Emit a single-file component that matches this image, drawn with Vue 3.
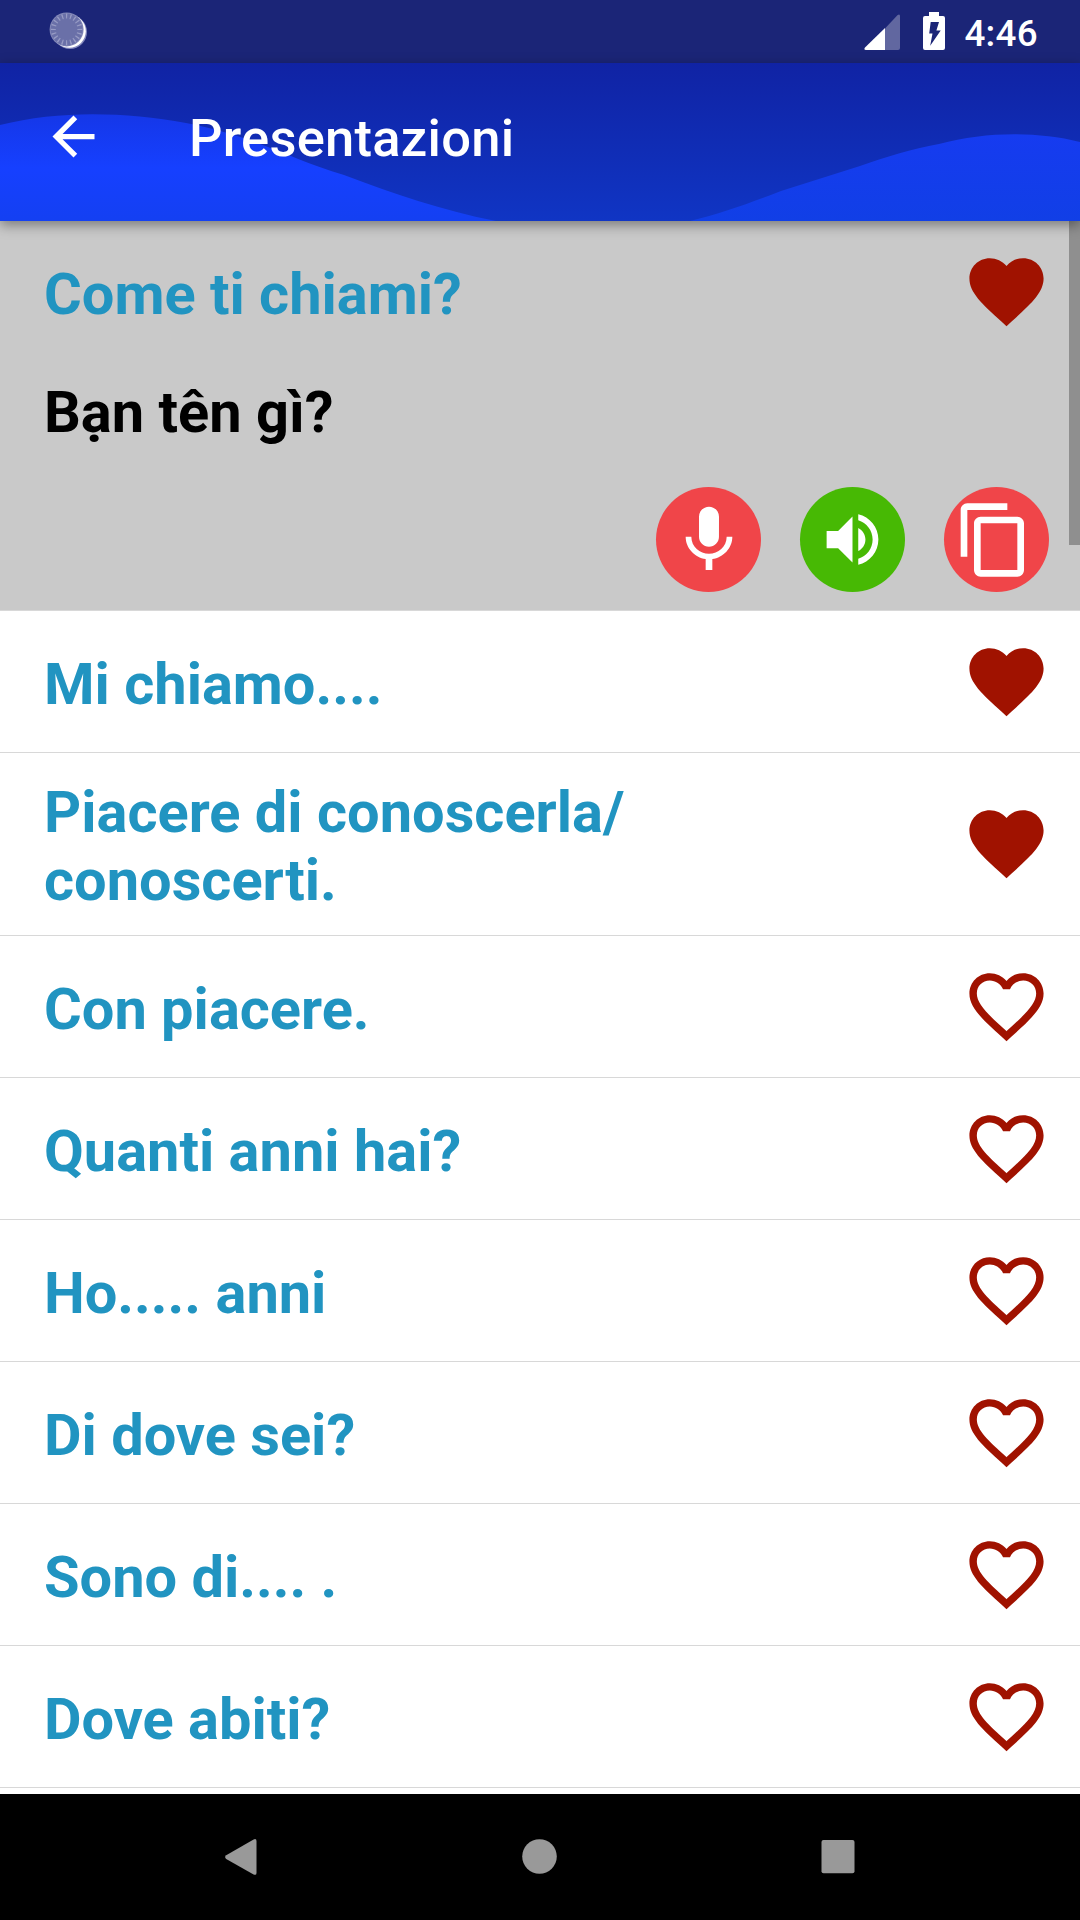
<template>
  <div class="screen">
    <!-- Barra di stato -->
    <div class="status-bar">
      <svg class="sync-icon" width="40" height="40" viewBox="0 0 40 40">
        <circle cx="22" cy="22" r="17" fill="#8388bd" />
        <circle cx="21.2" cy="21.2" r="16.6" fill="#ffffff" />
        <circle cx="18.6" cy="19.4" r="17" fill="#8388b8" />
        <circle cx="18.6" cy="19.4" r="16" fill="#6a70a8" />
        <circle class="ticks" cx="18.6" cy="19.4" r="13.3" pathLength="200" />
      </svg>
      <div class="status-right">
        <svg class="signal-icon" width="36" height="36" viewBox="0 0 36 36">
          <path d="M21 14.4L33.4 1.2Q36 -.6 36 2V34q0 2-2 2H21z" fill="#6167a0" />
          <path d="M21 14V36H2Q-.6 36 1 33.6z" fill="#ffffff" />
        </svg>
        <svg class="battery-icon" width="22" height="38" viewBox="0 0 22 38">
          <path
            fill="#ffffff"
            fill-rule="evenodd"
            d="M6 0h10v4h4q2 0 2 2v30q0 2-2 2H2q-2 0-2-2V6q0-2 2-2h4zM7.700 10L6.200 21.500H9.500L7.200 33.700L17.700 18.600H13.400L16 10z"
          />
        </svg>
        <span class="clock">4:46</span>
      </div>
    </div>

    <!-- Toolbar con onda -->
    <div class="toolbar">
      <svg class="wave" width="1080" height="158" viewBox="0 0 1080 158">
        <defs>
          <linearGradient id="waveLeft" x1="0" y1="0" x2="0" y2="1">
            <stop offset="0" stop-color="#1537e8" />
            <stop offset="0.5" stop-color="#1640ff" />
            <stop offset="1" stop-color="#1440f2" />
          </linearGradient>
          <linearGradient id="waveRight" x1="0" y1="0" x2="0" y2="1">
            <stop offset="0" stop-color="#163bf0" />
            <stop offset="1" stop-color="#113fe6" />
          </linearGradient>
        </defs>
        <path fill="url(#waveLeft)" d="M0 62C60 47 125 49 186 60C255 73 290 96 344 112C395 131 440 147 496 158H0z" />
        <path fill="url(#waveRight)" d="M690 158C722 150 750 140 781 128L860 103C885 94 912 86 939 81C985 69 1035 68 1080 79V158z" />
      </svg>
      <div class="toolbar-content">
        <svg class="back-icon" width="63" height="63" viewBox="0 0 24 24" fill="#ffffff">
          <path d="M20 11H7.83l5.59-5.59L12 4l-8 8 8 8 1.41-1.41L7.83 13H20v-2z" />
        </svg>
        <h1 class="title">Presentazioni</h1>
      </div>
    </div>

    <!-- Lista frasi -->
    <div class="phrase-list">
      <div v-for="phrase in phrases" :key="phrase.id" class="phrase" :class="{ open: phrase.id === openId }">
        <div class="phrase-row" @click="toggle(phrase)">
          <span class="phrase-text">{{ phrase.text }}</span>
          <svg class="heart" width="89" height="89" viewBox="0 0 24 24" @click.stop="phrase.favorite = !phrase.favorite">
            <path :d="phrase.favorite ? heartFull : heartBorder" />
          </svg>
        </div>
        <div v-if="phrase.id === openId" class="phrase-detail">
          <div class="translation">{{ phrase.translation }}</div>
          <div class="actions">
            <button v-for="action in actions" :key="action.name" class="action" :class="action.name">
              <svg viewBox="0 0 24 24" fill="#ffffff"><path :d="action.icon" /></svg>
            </button>
          </div>
        </div>
      </div>
      <div class="scrollbar"></div>
    </div>

    <!-- Barra di navigazione -->
    <div class="nav-bar">
      <svg width="36" height="40" viewBox="0 0 36 40" fill="#999999">
        <path d="M3.2 18.2L30.6 2.4Q33.5 1.3 33.5 4V36Q33.5 38.7 30.6 37.5L3.2 22Q1 20 3.2 18.2z" />
      </svg>
      <svg width="36" height="40" viewBox="0 0 36 40" fill="#999999">
        <circle cx="17.5" cy="19.5" r="17.3" />
      </svg>
      <svg width="36" height="40" viewBox="0 0 36 40" fill="#999999">
        <rect x="1.5" y="3" width="33" height="33.3" rx="2" />
      </svg>
    </div>
  </div>
</template>

<script setup>
import { ref } from "vue";

const heartFull =
  "M12 21.35l-1.45-1.32C5.4 15.36 2 12.28 2 8.5 2 5.42 4.42 3 7.5 3c1.74 0 3.41.81 4.5 2.09C13.09 3.81 14.76 3 16.5 3 19.58 3 22 5.42 22 8.5c0 3.78-3.4 6.86-8.55 11.54L12 21.35z";
const heartBorder =
  "M16.5 3c-1.74 0-3.41.81-4.5 2.09C10.91 3.81 9.24 3 7.5 3 4.42 3 2 5.42 2 8.5c0 3.78 3.4 6.86 8.55 11.54L12 21.35l1.45-1.32C18.6 15.36 22 12.28 22 8.5 22 5.42 19.58 3 16.5 3zm-4.4 15.55l-.1.1-.1-.1C7.14 14.24 4 11.39 4 8.5 4 6.5 5.5 5 7.5 5c1.54 0 3.04.99 3.57 2.36h1.87C13.46 5.99 14.96 5 16.5 5c2 0 3.5 1.5 3.5 3.5 0 2.89-3.14 5.74-7.9 10.05z";

const actions = [
  {
    name: "mic",
    icon: "M12 14c1.66 0 2.99-1.34 2.99-3L15 5c0-1.66-1.34-3-3-3S9 3.34 9 5v6c0 1.66 1.34 3 3 3zm5.3-3c0 3-2.54 5.1-5.3 5.1S6.7 14 6.7 11H5c0 3.41 2.72 6.23 6 6.72V21h2v-3.28c3.28-.48 6-3.3 6-6.72h-1.7z"
  },
  {
    name: "speaker",
    icon: "M3 9v6h4l5 5V4L7 9H3zm13.5 3c0-1.77-1.02-3.29-2.5-4.03v8.05c1.48-.73 2.5-2.25 2.5-4.02zM14 3.23v2.06c2.89.86 5 3.54 5 6.71s-2.11 5.85-5 6.71v2.06c4.01-.91 7-4.49 7-8.77s-2.99-7.86-7-8.77z"
  },
  {
    name: "copy",
    icon: "M16 1H4c-1.1 0-2 .9-2 2v14h2V3h12V1zm3 4H8c-1.1 0-2 .9-2 2v14c0 1.1.9 2 2 2h11c1.1 0 2-.9 2-2V7c0-1.1-.9-2-2-2zm0 16H8V7h11v14z"
  }
];

const phrases = ref([
  { id: 1, text: "Come ti chiami?", translation: "Bạn tên gì?", favorite: true },
  { id: 2, text: "Mi chiamo....", favorite: true },
  { id: 3, text: "Piacere di conoscerla/\nconoscerti.", favorite: true },
  { id: 4, text: "Con piacere.", favorite: false },
  { id: 5, text: "Quanti anni hai?", favorite: false },
  { id: 6, text: "Ho..... anni", favorite: false },
  { id: 7, text: "Di dove sei?", favorite: false },
  { id: 8, text: "Sono di.... .", favorite: false },
  { id: 9, text: "Dove abiti?", favorite: false }
]);
const openId = ref(1);

const toggle = (phrase) => {
  if (phrase.translation) {
    openId.value = openId.value === phrase.id ? null : phrase.id;
  }
};
</script>

<style>
body {
  margin: 0;
}
</style>

<style scoped>
.screen {
  display: flex;
  flex-direction: column;
  width: 1080px;
  height: 1920px;
  overflow: hidden;
  background: #ffffff;
  font-family: Roboto, "Noto Sans", sans-serif;
}

.status-bar {
  display: flex;
  justify-content: space-between;
  flex: 0 0 63px;
  background: #1b2577;
}

.sync-icon {
  margin: 10px 0 0 48px;
}

.ticks {
  fill: none;
  stroke: #979bc4;
  stroke-width: 5;
  stroke-dasharray: 3 7;
  stroke-dashoffset: 1.5;
}

.status-right {
  display: flex;
  align-items: flex-start;
  padding-right: 42px;
}

.signal-icon {
  margin: 14px 23px 0 0;
}

.battery-icon {
  margin: 12px 19px 0 0;
}

.clock {
  margin-top: 12px;
  color: #ffffff;
  font-size: 36.75px;
  font-weight: 500;
  letter-spacing: 0.3px;
  line-height: 44px;
}

.toolbar {
  position: relative;
  z-index: 1;
  flex: 0 0 158px;
  background: linear-gradient(#1023a4, #1035c4);
  box-shadow: 0 4px 12px rgba(0, 0, 0, 0.4);
}

.wave {
  position: absolute;
  top: 0;
  left: 0;
}

.toolbar-content {
  position: relative;
  display: flex;
  align-items: center;
  height: 147px;
  padding-left: 42px;
}

.title {
  margin: 2px 0 0 84px;
  color: #ffffff;
  font-size: 52.5px;
  font-weight: 500;
  letter-spacing: 0.25px;
  line-height: 62px;
}

.phrase-list {
  position: relative;
  flex: 1;
  overflow: hidden;
}

.phrase {
  border-bottom: 1px solid #d8d8d8;
}

.phrase.open {
  background: #c9c9c9;
}

.phrase-row {
  display: flex;
  justify-content: space-between;
  align-items: center;
  min-height: 141px;
  padding: 0 29px 0 44px;
}

.phrase-text {
  padding: 25.4px 0 20.6px;
  color: #2194c1;
  font-size: 57.75px;
  font-weight: 700;
  line-height: 68px;
  white-space: pre-line;
}

.heart {
  flex: none;
  fill: #a01200;
}

.phrase-detail {
  height: 248px;
}

.translation {
  padding: 16px 44px 0;
  color: #000000;
  font-size: 57.75px;
  font-weight: 700;
  line-height: 68px;
}

.actions {
  display: flex;
  justify-content: flex-end;
  gap: 39px;
  padding: 41px 31px 0 0;
}

.action {
  display: flex;
  justify-content: center;
  align-items: center;
  width: 105px;
  height: 105px;
  padding: 0;
  border: none;
  border-radius: 50%;
  background: #f04549;
}

.action svg {
  width: 80px;
  height: 80px;
}

.action.speaker {
  background: #47b904;
}

.action.speaker svg {
  width: 69px;
  height: 69px;
}

.action.copy svg {
  margin-right: 6px;
}

.scrollbar {
  position: absolute;
  top: 0;
  right: 0;
  width: 11px;
  height: 324px;
  background: #8f8f8f;
}

.nav-bar {
  display: flex;
  justify-content: space-between;
  flex: 0 0 126px;
  box-sizing: border-box;
  padding: 43px 224px 0 223px;
  background: #000000;
}
</style>
